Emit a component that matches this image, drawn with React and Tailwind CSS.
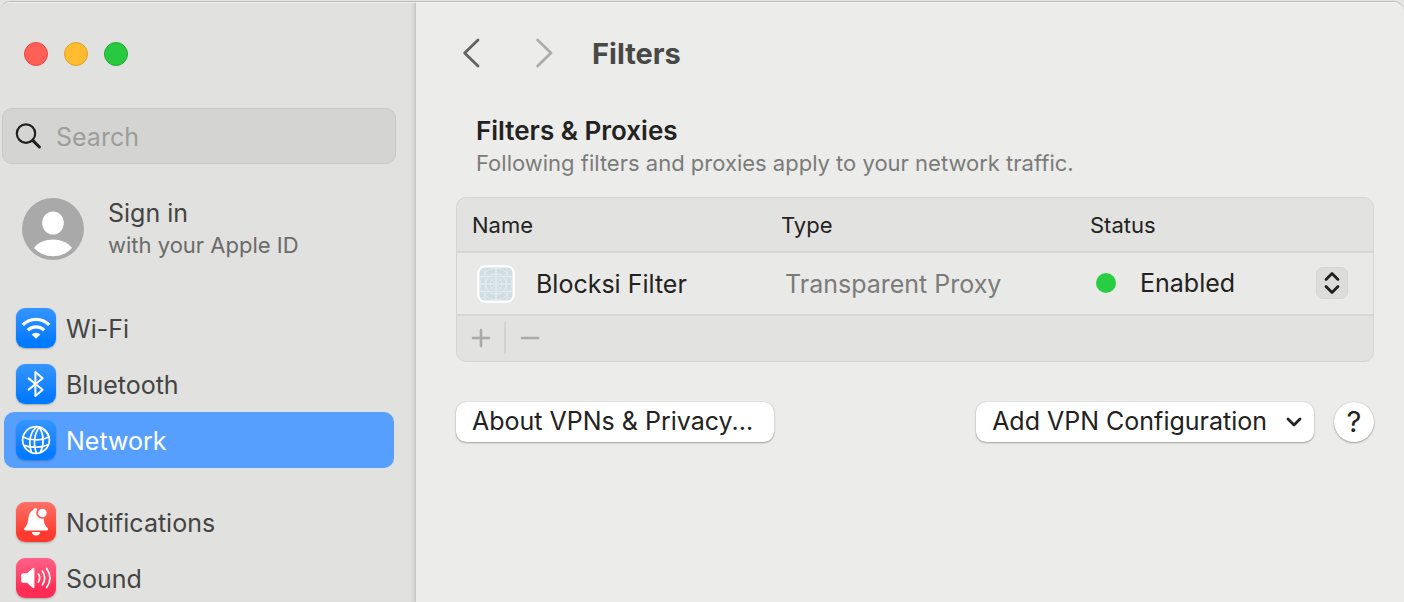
import React from 'react';

const iconFills = {
  blue: 'bg-linear-to-b from-[#3395ff] to-[#007aff] to-85%',
  red: 'bg-linear-to-b from-[#ff6f66] to-[#ff3b30] to-75%',
  pink: 'bg-linear-to-b from-[#ff6088] to-[#ff2d55] to-75%',
};

const WifiIcon = () => (
  <svg viewBox="0 0 40 40" className="size-10" fill="none" stroke="white" strokeWidth="3.2">
    <path d="M6.8 16.9A18.5 18.5 0 0 1 33.2 16.9" />
    <path d="M11.8 22.2A11.6 11.6 0 0 1 28.2 22.2" />
    <path d="M20 30.8L15.7 26.6A5.9 5.9 0 0 1 24.3 26.6Z" fill="white" stroke="none" />
  </svg>
);

const BluetoothIcon = () => (
  <svg viewBox="0 0 40 40" className="size-10" fill="none" stroke="white" strokeWidth="2" strokeLinecap="round" strokeLinejoin="round">
    <path d="M12.6 14.4L26.6 25.8L19.4 32V8L26.6 14.2L12.6 25.6" />
  </svg>
);

const GlobeIcon = () => (
  <svg viewBox="0 0 40 40" className="size-10" fill="none" stroke="white" strokeWidth="1.7">
    <circle cx="20" cy="20" r="13.4" />
    <path d="M21 6.6C14.6 11.5 11.8 21 15.4 32.4" />
    <path d="M23.4 7C18.6 13 16.6 24 20.6 33.4" />
    <path d="M23.4 7C27.8 14 28.4 24 24.4 32.4" />
    <path d="M23.4 7C28.6 9.4 31.6 13 33 17" />
    <path d="M6.8 16.6C13 20.6 26 21 33.2 16.8" />
    <path d="M8.2 25.4C14 27.8 26 28 32.4 24.6" />
  </svg>
);

const BellIcon = () => (
  <svg viewBox="0 0 40 40" className="size-10" fill="white">
    <path d="M19.4 6.3C20.4 6.3 21 6.6 21.4 7.4A5.9 5.9 0 0 0 27.6 16.6C28 20.5 28.3 22.6 30.4 24.8C31.6 26 32 26.6 32 27.2C32 28 31.4 28.4 30.5 28.4H9.5C8.6 28.4 8 28 8 27.2C8 26.6 8.4 26 9.6 24.8C13.8 20.5 10.6 11.2 17 8.3C17.6 7 18.2 6.3 19.4 6.3Z" />
    <circle cx="26.4" cy="11" r="4.3" />
    <path d="M16 30H24A4 3.4 0 0 1 16 30Z" />
  </svg>
);

const SpeakerIcon = () => (
  <svg viewBox="0 0 40 40" className="size-10" fill="none" stroke="white" strokeWidth="1.7" strokeLinecap="round">
    <path d="M5.2 17Q5.2 15.2 7 15.2H11L16.6 10.2Q18.4 9 18.4 11V29Q18.4 31 16.6 29.8L11 24.8H7Q5.2 24.8 5.2 23Z" fill="white" stroke="none" />
    <path d="M22.4 16Q25 20 22.4 24" />
    <path d="M26.4 13.2Q31 20 26.4 26.8" />
    <path d="M30.6 10.4Q37.4 20 30.6 29.6" />
  </svg>
);

const navGroups = [
  [
    { label: 'Wi-Fi', fill: iconFills.blue, Icon: WifiIcon },
    { label: 'Bluetooth', fill: iconFills.blue, Icon: BluetoothIcon },
    { label: 'Network', fill: iconFills.blue, Icon: GlobeIcon, active: true },
  ],
  [
    { label: 'Notifications', fill: iconFills.red, Icon: BellIcon },
    { label: 'Sound', fill: iconFills.pink, Icon: SpeakerIcon },
  ],
];

const NavItem = ({ label, fill, Icon, active }) => (
  <li>
    <a
      href={'#' + label.toLowerCase()}
      aria-current={active ? 'page' : undefined}
      className={
        active
          ? 'flex h-14 items-center gap-2.5 rounded-[10px] bg-[#579fff] px-3 text-white'
          : 'flex h-14 items-center gap-2.5 rounded-[10px] px-3 text-[#444443]'
      }
    >
      <span className={`size-10 shrink-0 rounded-[9px] shadow-[0_1px_2px_rgba(0,0,0,0.25)] ${fill}`}>
        <Icon />
      </span>
      <span className="pt-0.5">{label}</span>
    </a>
  </li>
);

const Sidebar = () => (
  <aside className="w-[416px] shrink-0 border-t border-r border-t-[#f2f2f1] border-r-[#c9c9c7] bg-[#e1e1df] shadow-[inset_-4px_0_4px_-3px_rgba(0,0,0,0.12)]">
    <div className="flex gap-4 px-6 pt-[39px]">
      <button aria-label="Close" className="size-6 rounded-full border border-[#e9493f] bg-[#ff5f57]" />
      <button aria-label="Minimize" className="size-6 rounded-full border border-[#e0a028] bg-[#febc2e]" />
      <button aria-label="Zoom" className="size-6 rounded-full border border-[#1eab30] bg-[#28c840]" />
    </div>

    <label className="mt-[42px] mr-[19px] ml-0.5 flex h-14 items-center gap-[15px] rounded-[10px] border border-[#c8c8c6] bg-[#d4d4d2] px-3">
      <svg viewBox="0 0 26 26" className="size-[26px] shrink-0" fill="none" stroke="#1f1f1f" strokeLinecap="round">
        <circle cx="11" cy="10.6" r="9.2" strokeWidth="2.2" />
        <path d="M18 17.6L24.4 24" strokeWidth="3" />
      </svg>
      <input
        type="search"
        aria-label="Search"
        placeholder="Search"
        className="w-full min-w-0 bg-transparent pt-0.5 outline-none placeholder:text-[#9d9d9b]"
      />
    </label>

    <a href="#account" className="mt-[33px] flex items-center gap-6 px-[22px]">
      <svg viewBox="0 0 62 62" className="size-[62px] shrink-0">
        <circle cx="31" cy="31" r="31" fill="#a9a9a9" />
        <ellipse cx="31" cy="25" rx="10.8" ry="11.6" fill="white" />
        <path d="M12 50C20 38.6 42 38.6 50 50C40 61 22 61 12 50Z" fill="white" />
      </svg>
      <span className="flex flex-col">
        <span className="text-[#444443]">Sign in</span>
        <span className="text-[22px] text-[#6b6b6a]">with your Apple ID</span>
      </span>
    </a>

    <nav aria-label="Settings" className="mt-[39px] flex flex-col gap-[26px] pr-[21px] pl-1">
      {navGroups.map((group, index) => (
        <ul key={index}>
          {group.map((item) => (
            <NavItem key={item.label} {...item} />
          ))}
        </ul>
      ))}
    </nav>
  </aside>
);

// Generic app icon: blueprint grid on a pale tile
const BlueprintIcon = () => (
  <svg viewBox="0 0 40 40" className="size-10 shrink-0" fill="none">
    <rect x="0.8" y="0.8" width="38.4" height="38.4" rx="8.5" fill="white" stroke="#e0e0de" strokeWidth="0.5" />
    <rect x="3.5" y="3.5" width="33" height="33" rx="5.5" fill="#d0dce3" />
    <g stroke="#e2ebef">
      <path d="M20 3.5V36.5M3.5 20H36.5" strokeWidth="1.4" />
      <path d="M9 3.5V36.5M31 3.5V36.5M3.5 12.5H36.5M3.5 27.5H36.5" strokeWidth="0.9" />
      <path d="M5 5L35 35M35 5L5 35" strokeWidth="0.8" />
      <circle cx="20" cy="20" r="16" strokeWidth="0.9" />
      <circle cx="20" cy="20" r="10.4" strokeWidth="1.3" />
      <circle cx="20" cy="20" r="6" strokeWidth="0.9" />
    </g>
  </svg>
);

const StatusSelect = () => (
  <div className="relative flex items-center pr-[25px] pb-0.5 pl-1.5">
    <span className="size-5 shrink-0 rounded-full bg-[#28cd41]" />
    <select aria-label="Blocksi Filter status" className="ml-6 h-10 w-full appearance-none bg-transparent text-[#222221]">
      <option>Enabled</option>
      <option>Disabled</option>
    </select>
    <span className="pointer-events-none absolute right-[25px] flex size-8 items-center justify-center rounded-[7px] border border-[#d6d6d4] bg-[#dcdcda]">
      <svg viewBox="0 0 16 24" className="h-6 w-4" fill="none" stroke="#1f1f1f" strokeWidth="2.8" strokeLinecap="round" strokeLinejoin="round">
        <path d="M2 8.4L8 2.6L14 8.4M2 15.6L8 21.4L14 15.6" />
      </svg>
    </span>
  </div>
);

const FilterTable = () => (
  <div className="mt-[18px] overflow-hidden rounded-[10px] border border-[#d5d5d3] bg-[#e2e2e0]">
    <table className="w-full table-fixed border-collapse text-left">
      <thead className="text-[22px] text-[#222221]">
        <tr className="h-[54px] border-b-2 border-[#d6d6d4]">
          <th className="w-[309px] pl-[15px] font-normal">Name</th>
          <th className="w-[309px] pl-[15px] font-normal">Type</th>
          <th className="pl-[15px] font-normal">Status</th>
        </tr>
      </thead>
      <tbody>
        <tr className="h-[63px] border-b-2 border-[#d6d6d4] bg-[#e9e9e7]">
          <td className="pl-[19px]">
            <div className="flex items-center gap-5 text-[#222221]">
              <BlueprintIcon />
              Blocksi Filter
            </div>
          </td>
          <td className="pl-[19px] text-[#7b7b7a]">Transparent Proxy</td>
          <td className="pl-[15px]">
            <StatusSelect />
          </td>
        </tr>
      </tbody>
    </table>
    <div className="flex h-[45px] items-center pb-0.5">
      <button aria-label="Add filter" className="flex h-8 w-[47px] items-center justify-center">
        <svg viewBox="0 0 20 20" className="size-5" stroke="#a9a9a8" strokeWidth="2.6" strokeLinecap="round">
          <path d="M10 2V18M2 10H18" />
        </svg>
      </button>
      <span className="h-8 w-0.5 bg-[#d2d2d0]" />
      <button aria-label="Remove filter" className="flex h-8 w-12 items-center justify-center">
        <svg viewBox="0 0 20 20" className="size-5" stroke="#a9a9a8" strokeWidth="2.6" strokeLinecap="round">
          <path d="M2 10H18" />
        </svg>
      </button>
    </div>
  </div>
);

const pushButton =
  'flex h-10 items-center rounded-[10px] bg-white pb-0.5 pl-4 text-[#222221] shadow-[0_1px_2px_rgba(0,0,0,0.3),0_0_1px_rgba(0,0,0,0.25)]';

const App = () => {
  return (
    <div className="flex h-screen flex-col overflow-hidden bg-[#e4e4e2] pt-px font-['Inter','Liberation_Sans',sans-serif] text-[25px] leading-8">
      <div className="flex min-h-0 flex-1 overflow-hidden rounded-t-[10px] border-t border-[#b9b9b7] bg-[#ececea]">
        <Sidebar />

        <main className="min-w-0 flex-1 border-t border-[#f8f8f7] pr-[30px] pl-10">
          <header className="flex h-[99px] items-center">
            <button aria-label="Back">
              <svg viewBox="0 0 32 32" className="size-8" fill="none" stroke="#636362" strokeWidth="2.8" strokeLinecap="round" strokeLinejoin="round">
                <path d="M22 3L8.6 16L22 29" />
              </svg>
            </button>
            <button aria-label="Forward" disabled className="ml-10">
              <svg viewBox="0 0 32 32" className="size-8" fill="none" stroke="#adadac" strokeWidth="2.8" strokeLinecap="round" strokeLinejoin="round">
                <path d="M9.6 3L23 16L9.6 29" />
              </svg>
            </button>
            <h1 className="ml-8 pt-0.5 text-[29px] font-bold text-[#484847]">Filters</h1>
          </header>

          <section>
            <div className="px-5 pt-[13px]">
              <h2 className="text-[26px] font-semibold text-[#222221]">Filters &amp; Proxies</h2>
              <p className="text-[22px] text-[#7b7b7a]">Following filters and proxies apply to your network traffic.</p>
            </div>
            <FilterTable />
          </section>

          <div className="mt-10 flex items-center gap-5">
            <button className={`pr-[21px] ${pushButton}`}>About VPNs &amp; Privacy...</button>
            <button aria-haspopup="menu" className={`ml-auto gap-[19px] pr-3 ${pushButton}`}>
              Add VPN Configuration
              <svg viewBox="0 0 16 12" className="mt-0.5 h-3 w-4" fill="none" stroke="#222221" strokeWidth="2.8" strokeLinecap="round" strokeLinejoin="round">
                <path d="M2 3L8 9L14 3" />
              </svg>
            </button>
            <button
              aria-label="Help"
              className="flex size-10 items-center justify-center rounded-full bg-white text-[29px] text-[#222221] shadow-[0_1px_2px_rgba(0,0,0,0.3),0_0_1px_rgba(0,0,0,0.25)]"
            >
              ?
            </button>
          </div>
        </main>
      </div>
    </div>
  );
};

export default App;
